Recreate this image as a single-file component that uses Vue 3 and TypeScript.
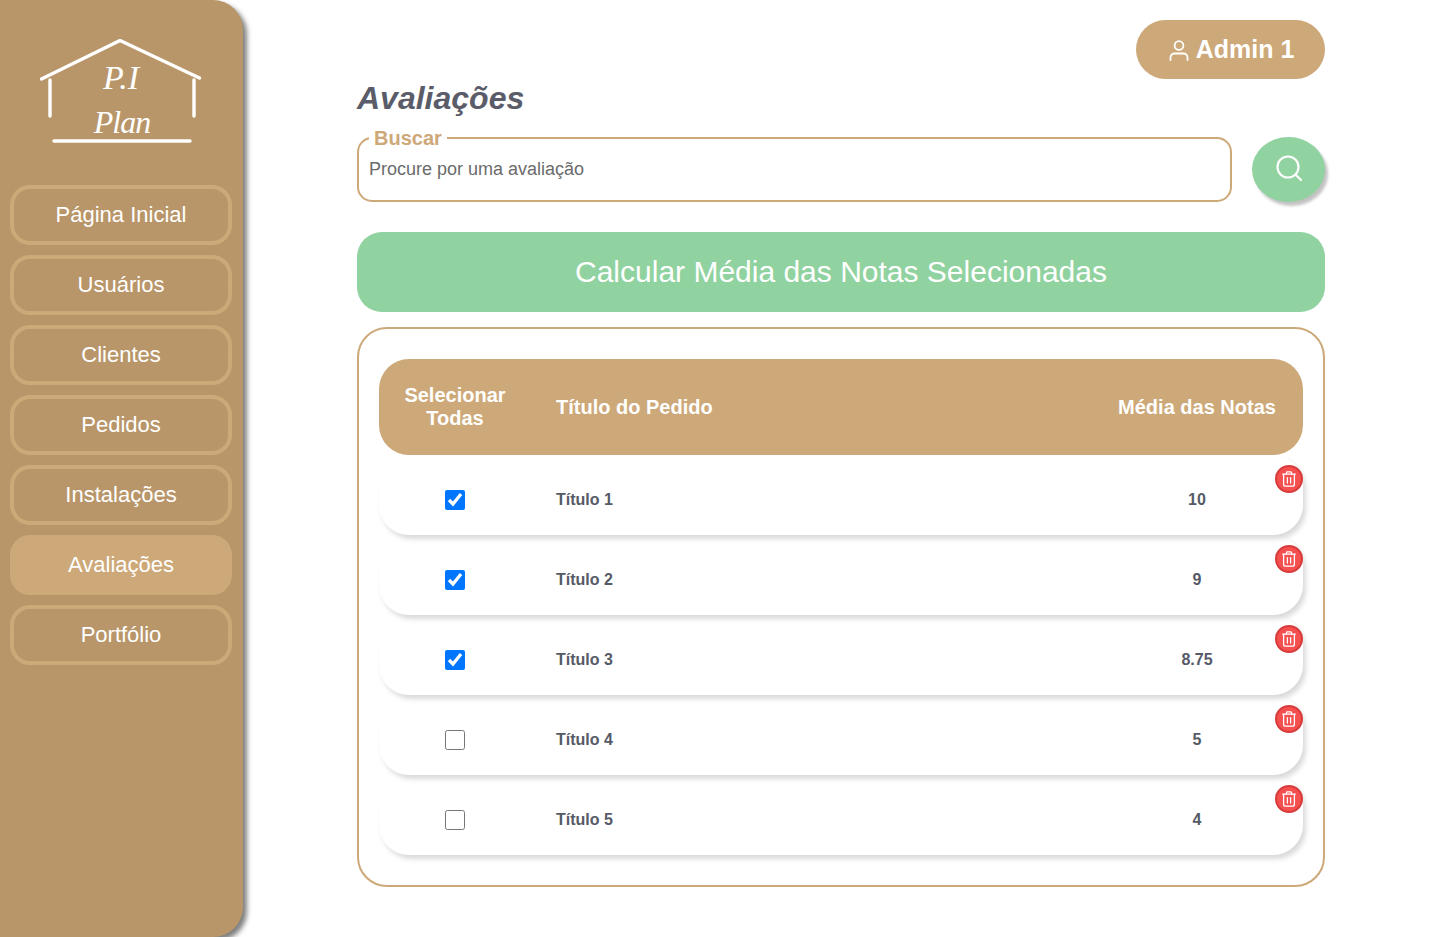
<template>
  <div class="page">
    <aside class="sidebar">
      <div class="logo">
        <svg width="162" height="106" viewBox="0 0 162 106" fill="none" stroke="#fff" stroke-width="3.4" stroke-linecap="round" stroke-linejoin="round">
          <path d="M1.5 40 L80 1.5 L159.5 39" />
          <path d="M10 41 V77" />
          <path d="M154 41 V77" />
          <path d="M14 102 H150" />
          <text x="81" y="50" class="logo-text" text-anchor="middle">P.I</text>
          <text x="82" y="94" class="logo-text plan" text-anchor="middle">Plan</text>
        </svg>
      </div>
      <nav class="menu">
        <a
          v-for="item in menu"
          :key="item"
          class="menu-item"
          :class="{ active: item === 'Avaliações' }"
        >{{ item }}</a>
      </nav>
    </aside>

    <main class="content">
      <div class="topbar">
        <button class="admin-btn">
          <svg width="22" height="22" viewBox="0 0 22 22" fill="none" stroke="#fff" stroke-width="1.8" stroke-linecap="round">
            <circle cx="11" cy="6.5" r="4.4" />
            <path d="M2.5 21 V18.5 A4 4 0 0 1 6.5 14.5 H15.5 A4 4 0 0 1 19.5 18.5 V21" />
          </svg>
          Admin 1
        </button>
      </div>

      <h1 class="title">Avaliações</h1>

      <div class="search-row">
        <fieldset class="search-box">
          <legend>Buscar</legend>
          <input type="text" placeholder="Procure por uma avaliação" />
        </fieldset>
        <button class="search-btn" aria-label="Buscar">
          <svg width="28" height="28" viewBox="0 0 28 28" fill="none" stroke="#fff" stroke-width="2.2" stroke-linecap="round">
            <circle cx="13" cy="13" r="10.5" />
            <path d="M21 21 L26 26" />
          </svg>
        </button>
      </div>

      <button class="calc-btn">Calcular Média das Notas Selecionadas</button>

      <section class="table-box">
        <div class="table-head">
          <div class="col-check">Selecionar Todas</div>
          <div class="col-title">Título do Pedido</div>
          <div class="col-grade">Média das Notas</div>
        </div>
        <div v-for="row in rows" :key="row.title" class="table-row">
          <div class="col-check">
            <input type="checkbox" :checked="row.checked" />
          </div>
          <div class="col-title">{{ row.title }}</div>
          <div class="col-grade">{{ row.grade }}</div>
          <button class="delete-btn" aria-label="Excluir">
            <svg width="14" height="16" viewBox="0 0 14 16" fill="none" stroke="#fff" stroke-width="1.3" stroke-linecap="round" stroke-linejoin="round">
              <path d="M0.7 3.2 H13.3" />
              <path d="M4.2 3 L4.8 0.9 H9.2 L9.8 3" />
              <path d="M1.6 3.4 V13.3 A1.9 1.9 0 0 0 3.5 15.2 H10.5 A1.9 1.9 0 0 0 12.4 13.3 V3.4" />
              <path d="M5.4 6.6 V12" />
              <path d="M8.6 6.6 V12" />
            </svg>
          </button>
        </div>
      </section>
    </main>
  </div>
</template>

<script setup lang="ts">
const menu: string[] = [
  'Página Inicial',
  'Usuários',
  'Clientes',
  'Pedidos',
  'Instalações',
  'Avaliações',
  'Portfólio',
]

const rows = [
  { title: 'Título 1', grade: '10', checked: true },
  { title: 'Título 2', grade: '9', checked: true },
  { title: 'Título 3', grade: '8.75', checked: true },
  { title: 'Título 4', grade: '5', checked: false },
  { title: 'Título 5', grade: '4', checked: false },
]
</script>

<style scoped>
.page {
  display: flex;
  height: 937px;
  overflow: hidden;
  background: #fff;
  font-family: "Liberation Sans", Arial, sans-serif;
}

.sidebar {
  width: 243px;
  height: 937px;
  flex-shrink: 0;
  background: #b89669;
  border-radius: 0 30px 30px 0;
  box-shadow: 4px 4px 5px rgba(0, 0, 0, 0.5);
  box-sizing: border-box;
  padding: 39px 11px 0 10px;
}

.logo {
  display: flex;
  justify-content: center;
  height: 146px;
}

.logo-text {
  font-family: "Liberation Serif", serif;
  font-style: italic;
  font-size: 34px;
  fill: #fff;
  stroke: none;
}

.logo-text.plan {
  font-size: 32px;
  letter-spacing: -1px;
}

.menu {
  display: flex;
  flex-direction: column;
  gap: 10px;
}

.menu-item {
  display: flex;
  align-items: center;
  justify-content: center;
  height: 60px;
  box-sizing: border-box;
  border: 4px solid #cda878;
  border-radius: 20px;
  color: #fff;
  font-size: 22px;
}

.menu-item.active {
  background: #cda878;
}

.content {
  width: 968px;
  margin-left: 114px;
  padding-top: 20px;
}

.topbar {
  display: flex;
  justify-content: flex-end;
}

.admin-btn {
  display: flex;
  align-items: center;
  justify-content: center;
  gap: 6px;
  width: 189px;
  height: 59px;
  padding: 0 0 0 1px;
  border: none;
  border-radius: 30px;
  background: #cda878;
  color: #fff;
  font-family: inherit;
  font-size: 25px;
  font-weight: 700;
}

.title {
  margin: 0;
  height: 58px;
  line-height: 38px;
  color: #5a5d69;
  font-size: 32px;
  font-style: italic;
  font-weight: 700;
}

.search-row {
  display: flex;
  gap: 20px;
  margin-top: -10px;
}

.search-box {
  flex: 1;
  height: 75px;
  margin: 0;
  padding: 0 10px;
  box-sizing: border-box;
  border: 2px solid #cda878;
  border-radius: 15px;
  min-width: 0;
}

.search-box legend {
  padding: 0 5px;
  color: #cda878;
  font-size: 20px;
  font-weight: 700;
  line-height: 22px;
}

.search-box input {
  display: block;
  width: 100%;
  height: 40px;
  padding: 0;
  border: none;
  outline: none;
  font-family: inherit;
  font-size: 18px;
  color: #555a66;
}

.search-box input::placeholder {
  color: #6b6b6b;
  opacity: 1;
}

.search-btn {
  display: flex;
  align-items: center;
  justify-content: center;
  width: 73px;
  height: 65px;
  margin-top: 10px;
  padding: 0 0 4px;
  border: none;
  border-radius: 50%;
  background: #90d2a0;
  box-shadow: 3px 4px 3px rgba(0, 0, 0, 0.24);
}

.calc-btn {
  display: block;
  width: 100%;
  height: 80px;
  margin-top: 30px;
  border: none;
  border-radius: 25px;
  background: #90d2a0;
  color: #fff;
  font-family: inherit;
  font-size: 30px;
}

.table-box {
  height: 560px;
  margin-top: 15px;
  padding: 30px 20px 0;
  box-sizing: border-box;
  border: 2px solid #cda878;
  border-radius: 30px;
}

.table-head,
.table-row {
  display: grid;
  grid-template-columns: 152px 1fr 212px;
  align-items: center;
}

.table-head {
  height: 96px;
  border-radius: 30px;
  background: #cda878;
  color: #fff;
  font-size: 20px;
  font-weight: 700;
  line-height: 23px;
}

.table-row {
  position: relative;
  height: 80px;
  padding-top: 10px;
  box-sizing: border-box;
  border-radius: 30px;
  box-shadow: 3px 4px 5px rgba(0, 0, 0, 0.15);
  color: #555a66;
  font-size: 16px;
  font-weight: 700;
}

.col-grade {
  text-align: center;
}

.col-check {
  display: flex;
  justify-content: center;
  padding: 0 20px;
  text-align: center;
}

.col-check input {
  width: 20px;
  height: 20px;
  margin: 0;
}

.col-title {
  padding-left: 25px;
}

.delete-btn {
  position: absolute;
  top: 10px;
  right: 0;
  display: flex;
  align-items: center;
  justify-content: center;
  width: 28px;
  height: 28px;
  padding: 0;
  border: 2px solid #d63c3c;
  border-radius: 50%;
  background: #f55050;
  box-sizing: border-box;
}
</style>

<style>
body {
  margin: 0;
}
</style>
